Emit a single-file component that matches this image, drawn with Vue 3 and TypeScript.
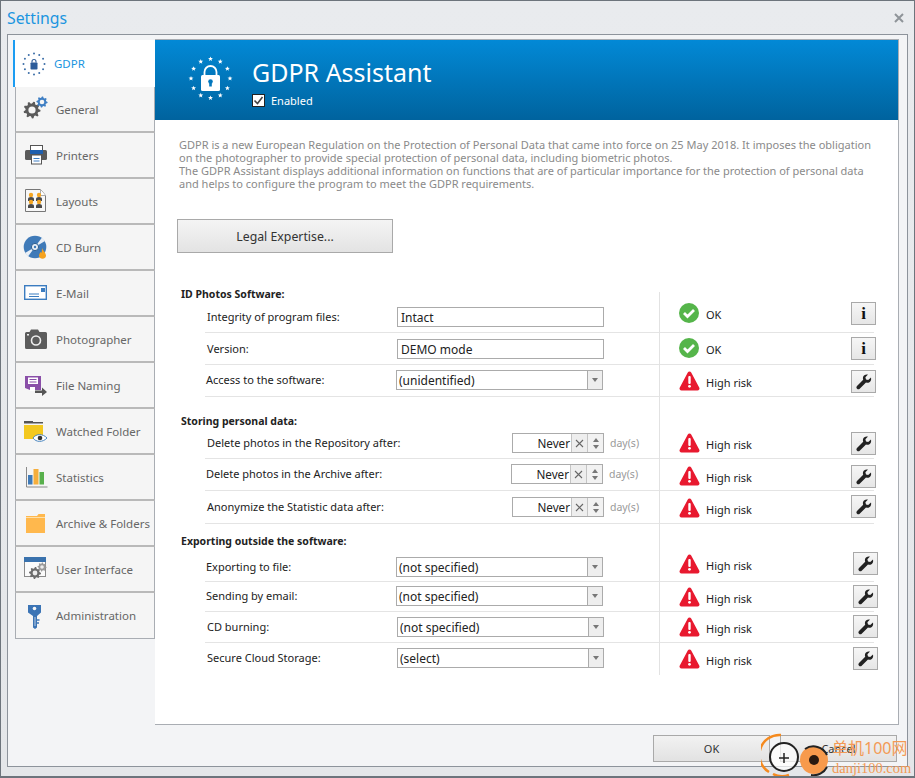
<script setup lang="ts">
/**
 * Settings dialog, GDPR page
 */
interface Tab {
  label: string
  icon: string
}

interface Row {
  label: string
  kind: 'input' | 'combo' | 'spin'
  value: string
  ok?: boolean
  top: number
  height: number
  labelY: number
  labelX: number
  ctrlY: number
  ctrlX: number
  statusY: number
  btnY: number
  btnX: number
}

const tabs: Tab[] = [
  { label: 'GDPR', icon: 'gdpr' },
  { label: 'General', icon: 'general' },
  { label: 'Printers', icon: 'printers' },
  { label: 'Layouts', icon: 'layouts' },
  { label: 'CD Burn', icon: 'cd' },
  { label: 'E-Mail', icon: 'mail' },
  { label: 'Photographer', icon: 'camera' },
  { label: 'File Naming', icon: 'naming' },
  { label: 'Watched Folder', icon: 'watched' },
  { label: 'Statistics', icon: 'stats' },
  { label: 'Archive & Folders', icon: 'archive' },
  { label: 'User Interface', icon: 'ui' },
  { label: 'Administration', icon: 'key' },
]

function row(
  label: string, kind: Row['kind'], value: string,
  [top, height, labelC, ctrl, status, btn]: number[],
  labelX: number, ctrlX: number, btnX: number, ok = false,
): Row {
  return {
    label, kind, value, ok, top, height,
    labelY: labelC - 8 - top,
    labelX,
    ctrlY: ctrl - top,
    ctrlX,
    statusY: status - top,
    btnY: btn - top,
    btnX,
  }
}

const sections: { title: string; gap: number; rows: Row[] }[] = [
  {
    title: 'ID Photos Software:',
    gap: 34,
    rows: [
      row('Integrity of program files:', 'input', 'Intact', [301, 32, 317, 307, 303, 302], 2, 1, 0, true),
      row('Version:', 'input', 'DEMO mode', [333, 32, 349, 339, 338, 337], 2, 1, 0, true),
      row('Access to the software:', 'combo', '(unidentified)', [365, 32, 380, 370, 371, 370], 1, 0, 0),
    ],
  },
  {
    title: 'Storing personal data:',
    gap: 17,
    rows: [
      row('Delete photos in the Repository after:', 'spin', 'Never', [428, 31, 443, 433, 433, 432], 2, 116, 0),
      row('Delete photos in the Archive after:', 'spin', 'Never', [459, 32, 474, 464, 466, 465], 1, 115, 0),
      row('Anonymize the Statistic data after:', 'spin', 'Never', [491, 33, 507, 497, 498, 495], 2, 116, 0),
    ],
  },
  {
    title: 'Exporting outside the software:',
    gap: 10,
    rows: [
      row('Exporting to file:', 'combo', '(not specified)', [548, 34, 567, 557, 554, 552], 1, 0, 2),
      row('Sending by email:', 'combo', '(not specified)', [582, 30, 596, 586, 587, 585], 1, 0, 2),
      row('CD burning:', 'combo', '(not specified)', [612, 31, 627, 617, 617, 615], 2, 1, 2),
      row('Secure Cloud Storage:', 'combo', '(select)', [643, 33, 658, 648, 649, 647], 2, 1, 2),
    ],
  },
]

// EU ring of twelve stars
function ring(cx: number, cy: number, r: number) {
  return Array.from({ length: 12 }, (_, i) => {
    const a = (i * Math.PI) / 6
    return { x: cx + r * Math.sin(a), y: cy - r * Math.cos(a) }
  })
}

function star(cx: number, cy: number, r: number) {
  const pts: string[] = []
  for (let i = 0; i < 10; i++) {
    const a = (i * Math.PI) / 5
    const d = i % 2 ? r * 0.42 : r
    pts.push(`${(cx + d * Math.sin(a)).toFixed(2)},${(cy - d * Math.cos(a)).toFixed(2)}`)
  }
  return pts.join(' ')
}

function gear(cx: number, cy: number, r: number, teeth: number) {
  const pts: string[] = []
  const steps = teeth * 4
  for (let i = 0; i < steps; i++) {
    const a = (i * 2 * Math.PI) / steps
    const d = i % 4 < 2 ? r : r * 0.76
    pts.push(`${(cx + d * Math.cos(a)).toFixed(2)},${(cy + d * Math.sin(a)).toFixed(2)}`)
  }
  return pts.join(' ')
}

const headerStars = ring(43.5, 38.5, 19.5)
const tabDots = ring(12, 13, 10.5)
</script>

<template>
  <div class="window">
    <div class="titlebar">
      <span class="title">Settings</span>
      <svg class="close" width="10" height="10" viewBox="0 0 10 10">
        <path d="M1 1l8 8M9 1l-8 8" stroke="#8f9499" stroke-width="2" fill="none" />
      </svg>
    </div>

    <div class="frame">
      <div class="columns">
        <nav class="tabs">
          <div v-for="(t, i) in tabs" :key="t.label" class="tab" :class="{ active: i === 0 }">
            <svg class="tab-icon" width="26" height="26" viewBox="0 0 26 26">
              <template v-if="t.icon === 'gdpr'">
                <circle v-for="(d, n) in tabDots" :key="n" :cx="d.x" :cy="d.y" r="1" fill="#3c6ea8" />
                <rect x="8.5" y="11.5" width="7" height="7" rx=".8" fill="#2d5c9a" />
                <path d="M10 11.500V10.500a2 2 0 0 1 4 0v1" fill="none" stroke="#2d5c9a" stroke-width="1.100" />
              </template>
              <template v-else-if="t.icon === 'general'">
                <polygon :points="gear(10, 14, 8.5, 9)" fill="#5b5b5b" />
                <circle cx="10" cy="14" r="3.6" fill="#f5f5f5" />
                <polygon :points="gear(20, 6, 5.6, 8)" fill="#3f7fc4" />
                <circle cx="20" cy="6" r="2.3" fill="#f5f5f5" />
              </template>
              <template v-else-if="t.icon === 'printers'">
                <rect x="8.5" y="3.5" width="12" height="6" fill="#fff" stroke="#555" />
                <rect x="3" y="8" width="22" height="10" rx="1.5" fill="#5a5a5a" />
                <rect x="8" y="8" width="13" height="4" fill="#1f5fae" />
                <rect x="9.5" y="13" width="10" height="9" fill="#fff" stroke="#555" />
                <path d="M11.5 16.5h6M11.5 19h6" stroke="#3f7fc4" />
              </template>
              <template v-else-if="t.icon === 'layouts'">
                <path d="M3.5 1.5h15l5 6v16h-20z" fill="#f7f7f7" stroke="#777" />
                <path d="M18.5 1.5v6h5" fill="#fff" stroke="#aaa" />
                <g v-for="p in [[9, 7], [17, 7], [9, 14], [17, 14]]" :key="p.join()">
                  <circle :cx="p[0]" :cy="p[1]" r="2.2" fill="#f5a623" />
                  <path :d="`M${p[0] - 3} ${p[1] + 6}v-2a3 2 0 0 1 6 0v2z`" fill="#4a4a4a" />
                </g>
              </template>
              <template v-else-if="t.icon === 'cd'">
                <circle cx="13" cy="13" r="11.3" fill="#3f7ab8" />
                <path d="M13 13L20 3.5A11.3 11.3 0 0 1 23 7zM13 13L6 22.5A11.3 11.3 0 0 1 3 19z" fill="#e9eff6" />
                <circle cx="13" cy="13" r="3.6" fill="#e9eff6" stroke="#2f5f90" />
                <circle cx="13" cy="13" r="1.2" fill="#3f7ab8" />
                <path d="M20 14c1 3 4 4.500 4 8a3.600 3.600 0 0 1-7 0c0-2 1-3 1.500-4 .5 1 1 1 1.200 0 .3-1 .3-3 .3-4z" fill="#f5a21f" />
              </template>
              <template v-else-if="t.icon === 'mail'">
                <rect x="2.700" y="5.700" width="21.600" height="13.600" fill="#fff" stroke="#3b7cc0" stroke-width="1.400" />
                <path d="M7 14h10M7 16.500h10" stroke="#3b7cc0" />
                <rect x="19" y="8" width="4" height="4" fill="#3b7cc0" />
              </template>
              <template v-else-if="t.icon === 'camera'">
                <path d="M4.500 6h3l1.500-2.500h7L17.500 6h6a1.500 1.500 0 0 1 1.500 1.500v14a1.500 1.500 0 0 1-1.500 1.500h-19A1.500 1.500 0 0 1 3 21.500v-14A1.500 1.500 0 0 1 4.500 6z" fill="#5c5c5c" />
                <circle cx="14" cy="14.500" r="4.500" fill="none" stroke="#eee" stroke-width="1.600" />
                <rect x="5" y="8" width="2" height="1.500" fill="#eee" />
              </template>
              <template v-else-if="t.icon === 'naming'">
                <path d="M3 4h16v14H8l-5-2z" fill="#8a4fa8" />
                <rect x="6" y="5.500" width="10" height="6.500" fill="#fff" />
                <path d="M7.500 7.500h7M7.500 10h7" stroke="#8a4fa8" />
                <rect x="8" y="15" width="5" height="4" fill="#fff" />
                <path d="M13 20.500h7v-3l5 4.500-5 4v-3h-7z" fill="#555" transform="translate(0 -2)" />
              </template>
              <template v-else-if="t.icon === 'watched'">
                <rect x="2" y="4" width="19" height="1.500" fill="#555" />
                <rect x="2" y="3" width="9" height="1.500" fill="#555" />
                <rect x="2" y="7" width="19" height="14" fill="#f3c81f" />
                <path d="M11 20c3-4.500 10-4.500 14 0-4 4.500-11 4.500-14 0z" fill="#fff" stroke="#4a86c0" />
                <circle cx="18" cy="20" r="2.300" fill="#333" />
              </template>
              <template v-else-if="t.icon === 'stats'">
                <path d="M4.500 3v20h21" fill="none" stroke="#8a8a8a" />
                <rect x="6" y="11" width="4.500" height="9.500" fill="#3f7ab8" />
                <rect x="11.500" y="5" width="5" height="15.500" fill="#f5ae3c" />
                <rect x="17.500" y="8" width="4.500" height="12.500" fill="#58b04c" />
              </template>
              <template v-else-if="t.icon === 'archive'">
                <path d="M4 6h11l1.500-2H23v19H4z" fill="#ffb84d" />
                <path d="M4 7.500h19" stroke="#ffe0a8" />
              </template>
              <template v-else-if="t.icon === 'ui'">
                <rect x="2.500" y="1.500" width="21" height="19" fill="#fbfbfb" stroke="#8a8a8a" />
                <rect x="2" y="1" width="22" height="5" fill="#3a72ad" />
                <polygon :points="gear(13, 17, 6, 8)" fill="#6d6d6d" />
                <circle cx="13" cy="17" r="2.400" fill="#eee" />
                <polygon :points="gear(20, 11, 4.500, 8)" fill="#9a9a9a" />
                <circle cx="20" cy="11" r="1.800" fill="#eee" />
              </template>
              <template v-else-if="t.icon === 'key'">
                <path d="M6 2h13v7.500l-4 3.500v11.500l-2 1.500-2-1.500V13L6 9.500z" fill="#3b74b5" />
                <circle cx="12.500" cy="5.500" r="1.800" fill="#f5f5f5" />
                <path d="M15 17h2.500M15 20h2" stroke="#3b74b5" stroke-width="1.500" />
                <path d="M13 14v9" stroke="#f5f5f5" stroke-width=".7" />
              </template>
            </svg>
            <span class="tab-label">{{ t.label }}</span>
          </div>
        </nav>

        <main class="pane">
          <header class="banner">
            <svg class="banner-logo" width="86" height="80" viewBox="0 0 86 80">
              <polygon v-for="(s, n) in headerStars" :key="n" :points="star(s.x, s.y, 2.600)" fill="#fff" />
              <path d="M37.500 35v-3a6 6 0 0 1 12 0v3" fill="none" stroke="#fff" stroke-width="1.800" />
              <rect x="34" y="35" width="19" height="16" rx="1.500" fill="#fff" />
              <circle cx="43.500" cy="41.500" r="2.300" fill="#0277bd" />
              <rect x="42.200" y="41.500" width="2.600" height="5" fill="#0277bd" />
            </svg>
            <div class="banner-text">
              <h1>GDPR Assistant</h1>
              <label class="enabled">
                <span class="checkbox">
                  <svg width="11" height="11" viewBox="0 0 11 11">
                    <path d="M1.500 5.500l3 3 5-6.500" fill="none" stroke="#444" stroke-width="1.600" />
                  </svg>
                </span>
                Enabled
              </label>
            </div>
          </header>

          <div class="content">
            <p class="intro">
              GDPR is a new European Regulation on the Protection of Personal Data that came into force on 25 May 2018. It imposes the obligation<br>
              on the photographer to provide special protection of personal data, including biometric photos.<br>
              The GDPR Assistant displays additional information on functions that are of particular importance for the protection of personal data<br>
              and helps to configure the program to meet the GDPR requirements.
            </p>
            <button class="legal">Legal Expertise...</button>

            <div class="table">
              <section v-for="s in sections" :key="s.title" :style="{ marginTop: s.gap + 'px' }">
                <h2>{{ s.title }}</h2>
                <div
                  v-for="r in s.rows"
                  :key="r.label"
                  class="row"
                  :class="{ last: r.label.startsWith('Secure') }"
                  :style="{ height: r.height + 'px' }"
                >
                  <span class="row-label" :style="{ marginTop: r.labelY + 'px', marginLeft: r.labelX + 'px' }">{{ r.label }}</span>
                  <div class="row-ctrl" :style="{ marginTop: r.ctrlY + 'px', marginLeft: r.ctrlX + 'px' }">
                    <div v-if="r.kind === 'input'" class="field">{{ r.value }}</div>
                    <div v-else-if="r.kind === 'combo'" class="field combo">
                      <span class="combo-text">{{ r.value }}</span>
                      <span class="combo-arrow"><i class="tri down" /></span>
                    </div>
                    <template v-else>
                      <div class="field spin">
                        <span class="spin-value">{{ r.value }}</span>
                        <span class="spin-clear">
                          <svg width="9" height="9" viewBox="0 0 9 9">
                            <path d="M1 1l7 7M8 1L1 8" stroke="#666" stroke-width="1.100" fill="none" />
                          </svg>
                        </span>
                        <span class="spin-arrows"><i class="tri up" /><i class="tri down" /></span>
                      </div>
                      <span class="unit">day(s)</span>
                    </template>
                  </div>
                  <div class="row-status" :style="{ marginTop: r.statusY + 'px' }">
                    <svg v-if="r.ok" width="20" height="20" viewBox="0 0 20 20">
                      <circle cx="10" cy="10" r="10" fill="#55b54a" />
                      <path d="M5 10l3.500 3.500 6.500-6.500" fill="none" stroke="#fff" stroke-width="2.800" />
                    </svg>
                    <svg v-else width="21" height="20" viewBox="0 0 21 20">
                      <path d="M10.500 .5a2 2 0 0 1 1.700 1l8 15a2 2 0 0 1-1.700 3h-16a2 2 0 0 1-1.700-3l8-15a2 2 0 0 1 1.700-1z" fill="#e8192f" />
                      <rect x="9.300" y="5" width="2.400" height="8" rx="1" fill="#fff" />
                      <circle cx="10.500" cy="15.300" r="1.400" fill="#fff" />
                    </svg>
                    <span class="status-text" :class="{ good: r.ok }">{{ r.ok ? 'OK' : 'High risk' }}</span>
                  </div>
                  <button class="tool" :style="{ marginTop: r.btnY + 'px', marginLeft: r.btnX + 'px' }">
                    <span v-if="r.ok" class="info">i</span>
                    <svg v-else width="16" height="16" viewBox="0 0 16 16">
                      <path d="M15 3.500l-2.800 2.600-2.200-.6-.6-2.200L12 .6C9.800 0 7.500 1 7 3.200c-.2.900-.1 1.800.2 2.500L1 12c-.8.800-.8 1.900 0 2.700.8.800 1.900.8 2.700 0l6.300-6.200c.8.300 1.600.4 2.500.2 2.200-.6 3.100-3 2.500-5.200z" fill="#222" />
                    </svg>
                  </button>
                </div>
              </section>
            </div>
          </div>
        </main>
      </div>

      <footer class="actions">
        <button class="action">OK</button>
        <button class="action">Cancel</button>
      </footer>
    </div>

    <div class="watermark">
      <svg width="78" height="46" viewBox="0 0 78 46">
        <path d="M20 3A20 20 0 0 0 8 40" fill="none" stroke="#f58a1f" stroke-width="2.500" />
        <path d="M12 42A20 20 0 0 0 28 43" fill="none" stroke="#f58a1f" stroke-width="2.500" />
        <circle cx="23" cy="25" r="14" fill="#fff" fill-opacity=".7" stroke="#222" stroke-width="2" />
        <path d="M18 26h10M23 21v10" stroke="#222" stroke-width="1.500" />
        <circle cx="53" cy="28" r="14" fill="#f79a4c" />
        <path d="M44 17A15 15 0 0 1 66 23M66 35A15 15 0 0 1 50 43" fill="none" stroke="#222" stroke-width="2" />
        <circle cx="53" cy="28" r="5" fill="#2a1a10" />
      </svg>
      <div class="wm-text">
        <span class="wm-cn">单机100网</span>
        <span class="wm-en">danji100.com</span>
      </div>
    </div>
  </div>
</template>

<style scoped>
.window {
  position: relative;
  box-sizing: border-box;
  width: 915px;
  height: 778px;
  border: 1px solid #6d747c;
  border-bottom-width: 2px;
  background: linear-gradient(#e9ebee, #e4e6e9);
  font-family: "Noto Sans", "Noto Sans CJK SC", sans-serif;
  font-size: 11px;
  color: #222;
  overflow: hidden;
}

.titlebar {
  display: flex;
  align-items: center;
  justify-content: space-between;
  height: 33px;
  padding: 0 10px 0 6px;
}

.title {
  font-size: 15.800px;
  color: #1b95e0;
}

.frame {
  box-sizing: border-box;
  height: 733px;
  margin-left: 6px;
  margin-right: 6px;
  padding: 5px 7px 0 5px;
  border: 1px solid #8d939b;
  background: #f3f4f6;
}

.columns {
  display: flex;
  height: 685px;
}

.tabs {
  width: 142px;
  flex: none;
}

.tab {
  box-sizing: border-box;
  display: flex;
  align-items: center;
  height: 46px;
  margin-left: 2px;
  padding-left: 6px;
  border: 1px solid #a9adb3;
  border-top: none;
  border-bottom: 2px solid #b9b9b9;
  background: #f5f5f5;
  color: #666;
  font-size: 11.500px;
}

.tab:last-child {
  border-bottom: 1px solid #a9adb3;
}

.tab.active {
  height: 47px;
  margin-left: 0;
  padding-left: 7px;
  border: none;
  border-left: 2px solid #1b9cf2;
  background: #fff;
  color: #1b95e0;
}

.tab-icon {
  flex: none;
}

.tab-label {
  margin-left: 8px;
  white-space: nowrap;
}

.tab.active .tab-label {
  margin-left: 6px;
}

.pane {
  box-sizing: border-box;
  width: 744px;
  flex: none;
  border: 1px solid #a9adb3;
  border-width: 0 1px 1px 0;
  background: #fff;
  box-shadow: 0 -1px 0 #a9adb3;
}

.banner {
  display: flex;
  height: 80px;
  padding-left: 12px;
  background: linear-gradient(#0289d6, #00639e);
  color: #fff;
}

.banner-text {
  margin-left: -1px;
}

.banner h1 {
  margin: 13px 0 0;
  font-size: 25px;
  font-weight: 400;
  line-height: 38px;
}

.enabled {
  display: flex;
  align-items: center;
  gap: 6px;
  margin-top: 2px;
  font-size: 11px;
}

.checkbox {
  box-sizing: border-box;
  display: flex;
  align-items: center;
  justify-content: center;
  width: 13px;
  height: 13px;
  border: 1px solid #222;
  background: #fff;
}

.content {
  padding: 18px 0 0 24px;
}

.intro {
  margin: 0;
  font-size: 11px;
  line-height: 13px;
  color: #8a8a8a;
  white-space: nowrap;
}

.legal {
  display: block;
  box-sizing: border-box;
  width: 216px;
  height: 34px;
  margin: 29px 0 0 -2px;
  border: 1px solid #a9a9a9;
  background: linear-gradient(#f4f4f4, #e3e3e3);
  font: inherit;
  font-size: 12.300px;
  color: #333;
}

.table {
  position: relative;
  margin-left: 2px;
}

.table::before {
  content: "";
  position: absolute;
  left: 478px;
  top: 5px;
  height: 383px;
  border-left: 1px solid #e2e2e2;
}

h2 {
  margin: 0;
  height: 14px;
  font-size: 10.500px;
  line-height: 14px;
  font-weight: 700;
  color: #222;
}

.row {
  box-sizing: border-box;
  display: grid;
  grid-template-columns: 191px 283px 172px 27px;
  align-items: start;
  width: 669px;
  margin-left: 24px;
  border-bottom: 1px solid #e4e4e4;
}

.row.last {
  border-bottom: none;
}

.row-label {
  line-height: 16px;
  white-space: nowrap;
}

.row-ctrl {
  display: flex;
  align-items: center;
  gap: 6px;
}

.field {
  box-sizing: border-box;
  display: flex;
  align-items: center;
  width: 207px;
  height: 20px;
  padding-left: 3px;
  border: 1px solid #ababab;
  background: #fff;
  font-size: 12px;
  color: #222;
}

.combo {
  justify-content: space-between;
  padding-left: 2px;
  padding-right: 0;
}

.combo-arrow {
  display: flex;
  align-items: center;
  justify-content: center;
  width: 14px;
  height: 18px;
  border-left: 1px solid #ababab;
  background: #eee;
}

.tri {
  display: block;
  width: 0;
  height: 0;
  border-left: 3.500px solid transparent;
  border-right: 3.500px solid transparent;
}

.tri.down {
  border-top: 4px solid #777;
}

.tri.up {
  border-bottom: 4px solid #777;
}

.spin {
  width: 92px;
  padding-left: 0;
  font-size: 11.700px;
}

.spin-value {
  flex: 1;
  padding-right: 1px;
  text-align: right;
}

.spin-clear {
  display: flex;
  align-items: center;
  justify-content: center;
  width: 15px;
  height: 18px;
  border-left: 1px solid #c4c4c4;
  background: #eee;
}

.spin-arrows {
  display: flex;
  flex-direction: column;
  align-items: center;
  justify-content: center;
  gap: 3px;
  width: 15px;
  height: 18px;
  border-left: 1px solid #c4c4c4;
  background: #f2f2f2;
}

.unit {
  font-size: 10.500px;
  color: #999;
}

.row-status {
  display: flex;
  align-items: center;
  gap: 6px;
  height: 20px;
}

.status-text {
  margin-top: 3px;
  font-size: 11px;
  color: #222;
}

.status-text.good {
  margin-left: 1px;
}

.tool {
  box-sizing: border-box;
  display: flex;
  align-items: center;
  justify-content: center;
  width: 25px;
  height: 23px;
  padding: 0;
  border: 1px solid #a9a9a9;
  background: linear-gradient(#f6f6f6, #e6e6e6);
}

.info {
  font-family: "Liberation Serif", serif;
  font-size: 17px;
  font-weight: 700;
  line-height: 1;
  color: #111;
}

.actions {
  display: flex;
  justify-content: flex-end;
  gap: 10px;
  margin-top: 10px;
  padding-right: 3px;
}

.action {
  box-sizing: border-box;
  width: 117px;
  height: 27px;
  border: 1px solid #a9a9a9;
  background: linear-gradient(#f2f2f2, #e2e2e2);
  font: inherit;
  font-size: 11px;
  color: #333;
}

.watermark {
  position: absolute;
  left: 760px;
  top: 731px;
  display: flex;
}

.wm-text {
  display: flex;
  flex-direction: column;
  margin-left: -7px;
  padding-top: 4px;
  color: #f39a55;
  white-space: nowrap;
}

.wm-cn {
  font-size: 16px;
  line-height: 24px;
}

.wm-en {
  font-family: "Liberation Serif", serif;
  font-size: 14.500px;
  line-height: 16px;
}
</style>
